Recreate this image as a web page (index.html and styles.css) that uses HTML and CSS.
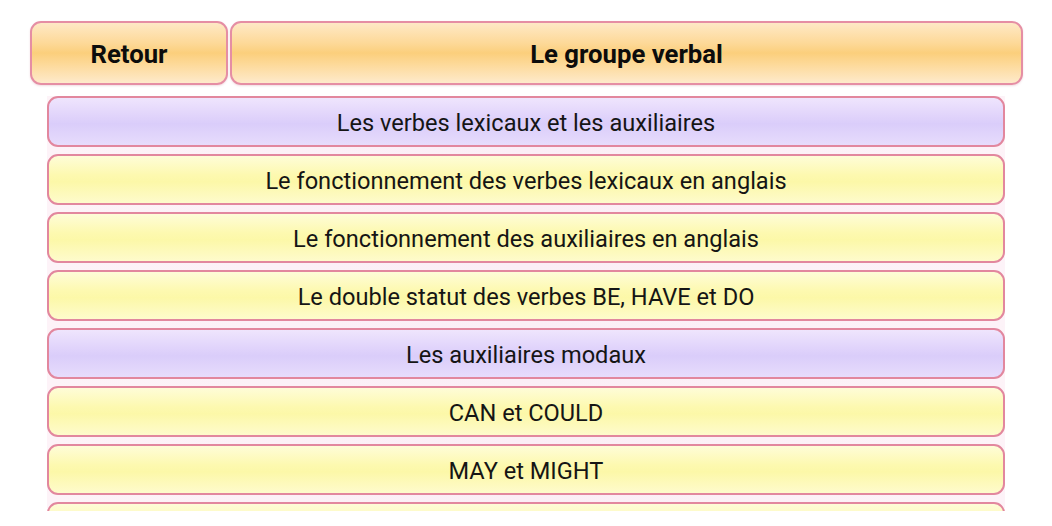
FILE: index.html
```html
<!DOCTYPE html>
<html lang="fr">
<head>
<meta charset="utf-8">
<title>Le groupe verbal</title>
<link rel="stylesheet" href="styles.css">
</head>
<body>
<div class="page">
  <header class="header">
    <div class="hbtn back">Retour</div>
    <div class="hbtn title">Le groupe verbal</div>
  </header>
  <div class="list">
    <div class="item lav">Les verbes lexicaux et les auxiliaires</div>
    <div class="item yel">Le fonctionnement des verbes lexicaux en anglais</div>
    <div class="item yel">Le fonctionnement des auxiliaires en anglais</div>
    <div class="item yel">Le double statut des verbes BE, HAVE et DO</div>
    <div class="item lav">Les auxiliaires modaux</div>
    <div class="item yel">CAN et COULD</div>
    <div class="item yel">MAY et MIGHT</div>
    <div class="item yel"></div>
  </div>
</div>
</body>
</html>
```
FILE: styles.css
```css
html, body {
  margin: 0;
  padding: 0;
  background: #ffffff;
}
body {
  font-family: Roboto, "Liberation Sans", sans-serif;
  color: #141414;
}
.page {
  width: 1052px;
  height: 526px;
  overflow: hidden;
}
.header {
  display: flex;
  gap: 2px;
  padding: 21px 0 0 30px;
}
.hbtn {
  box-sizing: border-box;
  height: 64px;
  padding-top: 2px;
  border: 2px solid #e58ea4;
  border-radius: 11px;
  background: linear-gradient(to bottom, #fee9c6 0%, #fdd896 35%, #fbcf7c 50%, #fdd998 68%, #feeacb 100%);
  display: flex;
  align-items: center;
  justify-content: center;
  font-weight: 700;
  font-size: 25.7px;
  color: #0c0c0c;
  box-shadow: 0 1px 2px rgba(200, 120, 140, 0.25);
}
.back {
  width: 198px;
}
.title {
  width: 793px;
}
.list {
  margin: 11px 0 0 47px;
  width: 958px;
  height: 415px;
  overflow: hidden;
  display: flex;
  flex-direction: column;
  gap: 7px;
  background: linear-gradient(to right, #fdf3f8, #fbeef6 50%, #fdf3f8);
}
.item {
  box-sizing: border-box;
  flex: 0 0 51px;
  padding-top: 2px;
  border: 2px solid #e2879e;
  border-radius: 11px;
  display: flex;
  align-items: center;
  justify-content: center;
  font-size: 23.6px;
  color: #151515;
}
.lav {
  background: linear-gradient(to bottom, #efe5fd 0%, #e0d3fb 40%, #dacdfa 55%, #e7dcfc 100%);
}
.yel {
  background: linear-gradient(to bottom, #fefcd8 0%, #fdf9b0 40%, #fcf8a8 55%, #fefbcc 100%);
}
```
